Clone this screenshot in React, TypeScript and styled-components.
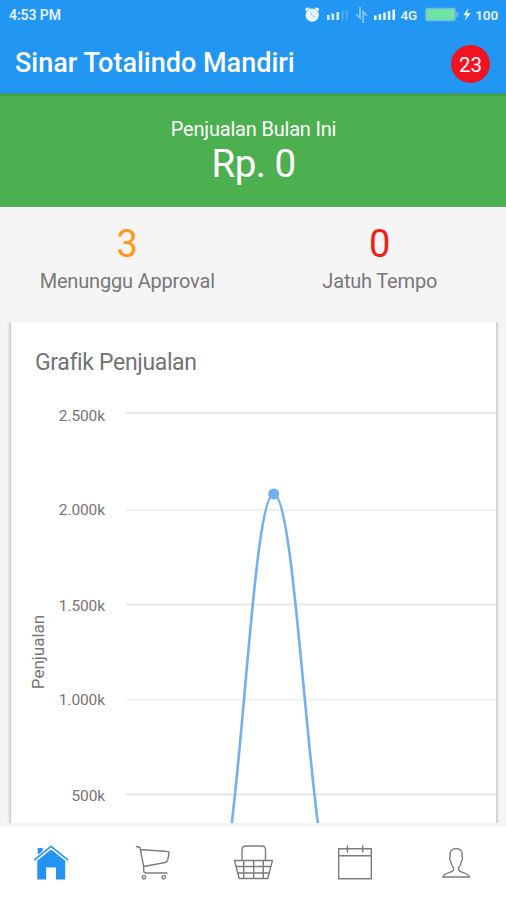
import React from "react";
import styled, { createGlobalStyle } from "styled-components";

const GlobalStyle = createGlobalStyle`
  * { box-sizing: border-box; }
  body { margin: 0; background: #f5f5f5; font-family: Roboto, "Liberation Sans", sans-serif; }
`;

const Screen = styled.div`
  width: 506px;
  height: 900px;
  display: flex;
  flex-direction: column;
  overflow: hidden;
  background: #f5f5f5;
`;

const StatusBar = styled.div`
  height: 30px;
  flex: none;
  display: flex;
  align-items: center;
  justify-content: space-between;
  padding: 0 8px 0 9px;
  background: #2196f3;
  color: #e3f2ff;
  font-weight: 600;
  line-height: 30px;
`;

const Clock = styled.span`
  font-size: 14px;
  letter-spacing: -0.1px;
`;

const StatusIcons = styled.div`
  display: flex;
  align-items: center;
  height: 30px;
  font-size: 13.5px;
  letter-spacing: -0.1px;
`;

const NetworkLabel = styled.span`
  margin: 0 1px 0 2px;
`;

const AppBar = styled.header`
  height: 64px;
  flex: none;
  display: flex;
  align-items: center;
  justify-content: space-between;
  padding: 0 16px 0 15px;
  background: #2196f3;
  border-bottom: 1px solid #3494a0;
`;

const Title = styled.h1`
  margin: 3px 0 0;
  color: #fff;
  font-size: 27px;
  font-weight: 500;
  line-height: 32px;
  white-space: nowrap;
`;

const CountBadge = styled.div`
  width: 39px;
  height: 38px;
  margin-top: 4px;
  border-radius: 50%;
  background: #f01423;
  color: #fff;
  font-size: 20.5px;
  line-height: 40px;
  font-weight: 400;
  text-align: center;
`;

const SalesBanner = styled.section`
  height: 113px;
  flex: none;
  padding: 23px 0 0 1px;
  background: linear-gradient(#43992f 0, #4caf50 3px);
  color: #fff;
  text-align: center;
`;

const BannerLabel = styled.div`
  font-size: 20px;
  line-height: 24px;
  letter-spacing: -0.2px;
`;

const BannerValue = styled.div`
  font-size: 38.5px;
  line-height: 46px;
  letter-spacing: -0.5px;
`;

const Stats = styled.section`
  height: 115px;
  flex: none;
  display: grid;
  grid-template-columns: 1fr 1fr;
  padding: 13px 0 0 1px;
  border-top: 1px solid #fff;
  text-align: center;
`;

const StatValue = styled.div<{ $color: string }>`
  color: ${(p) => p.$color};
  font-size: 38px;
  font-weight: 400;
  line-height: 46px;
`;

const StatLabel = styled.div`
  margin-top: 2px;
  color: #787878;
  font-size: 20px;
  line-height: 24px;
  letter-spacing: -0.18px;
`;

const Content = styled.main`
  flex: 1;
  min-height: 0;
  overflow: hidden;
  padding: 0 10px 0 11px;
`;

const ChartCard = styled.section`
  height: 600px;
  overflow: hidden;
  background: #fff;
  box-shadow: 0 0 3px 1px rgba(0, 0, 0, 0.26);
`;

const CardTitle = styled.h2`
  margin: 0;
  padding: 27px 0 0 24px;
  height: 58px;
  color: #737373;
  font-size: 23px;
  font-weight: 400;
  letter-spacing: -0.35px;
  line-height: 27px;
`;

const Chart = styled.svg`
  display: block;
`;

const AxisText = styled.text`
  fill: #757575;
  font-size: 15.5px;
  letter-spacing: -0.1px;
`;

const AxisTitle = styled.text`
  fill: #757575;
  font-size: 17px;
`;

const TabBar = styled.nav`
  height: 77px;
  flex: none;
  display: grid;
  grid-template-columns: 102px 102px 98px 106px 96px;
  place-items: center;
  padding-bottom: 2px;
  border-top: 3px solid #f5f5f5;
  background: #fff;
  z-index: 1;
`;

const Tab = styled.button`
  padding: 0;
  border: 0;
  background: none;
  line-height: 0;
`;

const TabIcon = styled.svg<{ $active?: boolean }>`
  display: block;
  fill: ${(p) => (p.$active ? "#2493f2" : "none")};
  stroke: ${(p) => (p.$active ? "none" : "#7c7c7c")};
  stroke-width: 1.4;
  stroke-linecap: round;
  stroke-linejoin: round;
`;

const ticks = [
  { label: "2.500k", y: 33, baseline: 40.5, color: "#e8e8e8" },
  { label: "2.000k", y: 130, baseline: 135, color: "#efefef" },
  { label: "1.500k", y: 224.5, baseline: 230.5, color: "#e8e8e8" },
  { label: "1.000k", y: 319.5, baseline: 325, color: "#f1f1f1" },
  { label: "500k", y: 414.5, baseline: 420.5, color: "#e8e8e8" },
];

const StatusGlyphs = () => (
  <svg width="94" height="20" viewBox="305 5 94 20" aria-hidden="true">
    <g fill="#e9f5ff">
      <circle cx="313.2" cy="15.2" r="6.6" />
      <path d="M307 11V8.2h3.4zM319.4 11V8.2h-3.4z" stroke="#e9f5ff" strokeLinejoin="round" />
    </g>
    <path d="M311 12.5l2.5 3.2 2.6 1.6" fill="none" stroke="#a9d6fa" strokeWidth="1.2" />
    <g fill="#d3eaff">
      <rect x="328" y="15" width="2.6" height="5" />
      <rect x="332.5" y="13.5" width="2.6" height="6.5" />
      <rect x="337.5" y="12" width="2.6" height="8" />
    </g>
    <g fill="#4faaf5">
      <rect x="342.5" y="11" width="2.2" height="9" />
      <rect x="346.7" y="10" width="2" height="10" />
    </g>
    <path d="M361 7v11l-3.7-3.7M364.2 23V12l3.7 3.7" fill="none" stroke="#84c4f9" strokeWidth="1.9" />
    <g fill="#eaf5ff">
      <rect x="375" y="15.5" width="2.6" height="4.5" />
      <rect x="379.6" y="14" width="2.6" height="6" />
      <rect x="384.2" y="12.5" width="2.6" height="7.5" />
      <rect x="388.8" y="11" width="2.6" height="9" />
      <rect x="393.4" y="9.5" width="2.6" height="10.5" />
    </g>
  </svg>
);

const PowerGlyphs = () => (
  <svg width="57" height="20" viewBox="419 5 57 20" aria-hidden="true">
    <rect x="427" y="8.5" width="29" height="12" rx="1.5" fill="#70e4a5" stroke="#75b9df" strokeWidth="1.6" />
    <path d="M457.2 12h2v5h-2z" fill="#75b9df" />
    <path d="M469.3 8l-5 7.3h3.3l-2 5.7 6.3-8h-3.7z" fill="#e9f5ff" />
  </svg>
);

const SalesChart = () => (
  <Chart width="485" height="480" viewBox="0 0 485 480" role="img" aria-label="Grafik Penjualan">
    {ticks.map((t) => (
      <g key={t.label}>
        <path d={`M115 ${t.y}H485`} stroke={t.color} strokeWidth="2" />
        <AxisText x="94" y={t.baseline} textAnchor="end">{t.label}</AxisText>
      </g>
    ))}
    <AxisTitle transform="translate(33 272) rotate(-90)" textAnchor="middle">Penjualan</AxisTitle>
    <path
      d="M204.5 509C228 509 239.5 114 262.7 114C286.5 114 299.5 509 324 509"
      fill="none"
      stroke="#74b0ec"
      strokeWidth="2.6"
    />
    <circle cx="262.7" cy="114" r="5.5" fill="#74b0ec" />
  </Chart>
);

const HomeIcon = () => (
  <TabIcon $active width="36" height="36" viewBox="33 844 36 36">
    <path d="M37.7 848h5v5l-5 4zM37.3 860.5L51 849.3l14.2 11.2V879.5H56V867.5H46.2V879.5H37.3z" />
    <path d="M34.7 859.7L51 846.7l16.5 13" fill="none" stroke="#fff" strokeWidth="4" />
    <path d="M34.7 859.7L51 846.4l16.5 13.3" fill="none" stroke="#2493f2" strokeWidth="1.6" />
  </TabIcon>
);

const CartIcon = () => (
  <TabIcon width="36" height="36" viewBox="135 844 36 36">
    <path d="M136.5 846.5l3.5 1 3.7 19.3v4q0 2.2 2.5 2.2H167M140.5 849.5l26.8 2c1.5 0 2 .5 1.7 2l-1.3 6.5q-.5 2-2.7 2.5l-21 4" />
    <circle cx="144" cy="877.3" r="1.7" />
    <circle cx="163.7" cy="877.3" r="1.7" />
  </TabIcon>
);

const BasketIcon = () => (
  <TabIcon width="40" height="36" viewBox="233 844 40 36">
    <path d="M242 860v-10q0-4 4-4h15.500q4 0 4 4v10M234.500 860.500h38l-4.800 18h-28.500zM236 866.500h35M237.500 873h32M243.700 860.500v18M253.700 860.500v18M263.300 860.500v18" />
  </TabIcon>
);

const CalendarIcon = () => (
  <TabIcon width="36" height="36" viewBox="337 844 36 36">
    <path d="M338.700 848.700h32.600v30h-32.600zM338.700 855.700h32.600M347.400 846v6M362.700 846v6" />
  </TabIcon>
);

const PersonIcon = () => (
  <TabIcon width="36" height="36" viewBox="438 844 36 36">
    <path d="M453.500 870v-2.500c-1.700-1.500-2.500-3.500-2.800-6.500-1.200-1-1.300-3.200-.6-4.300-.7-5 1.200-8.200 6-8.200s6.700 3.200 6 8.200c.7 1.100.6 3.300-.6 4.300-.3 3-1.100 5-2.800 6.500v2.500c.8 3 9.500 2.200 10.800 7H442.700c1.300-4.800 10-4 10.800-7z" />
  </TabIcon>
);

const tabs = [
  { name: "home", Icon: HomeIcon },
  { name: "cart", Icon: CartIcon },
  { name: "basket", Icon: BasketIcon },
  { name: "calendar", Icon: CalendarIcon },
  { name: "profile", Icon: PersonIcon },
];

export default function App() {
  return (
    <Screen>
      <GlobalStyle />
      <StatusBar>
        <Clock>4:53 PM</Clock>
        <StatusIcons>
          <StatusGlyphs />
          <NetworkLabel>4G</NetworkLabel>
          <PowerGlyphs />
          <span>100</span>
        </StatusIcons>
      </StatusBar>
      <AppBar>
        <Title>Sinar Totalindo Mandiri</Title>
        <CountBadge>23</CountBadge>
      </AppBar>
      <SalesBanner>
        <BannerLabel>Penjualan Bulan Ini</BannerLabel>
        <BannerValue>Rp. 0</BannerValue>
      </SalesBanner>
      <Stats>
        <div>
          <StatValue $color="#ff9820">3</StatValue>
          <StatLabel>Menunggu Approval</StatLabel>
        </div>
        <div>
          <StatValue $color="#f02018">0</StatValue>
          <StatLabel>Jatuh Tempo</StatLabel>
        </div>
      </Stats>
      <Content>
        <ChartCard>
          <CardTitle>Grafik Penjualan</CardTitle>
          <SalesChart />
        </ChartCard>
      </Content>
      <TabBar>
        {tabs.map(({ name, Icon }) => (
          <Tab key={name} aria-label={name}>
            <Icon />
          </Tab>
        ))}
      </TabBar>
    </Screen>
  );
}
